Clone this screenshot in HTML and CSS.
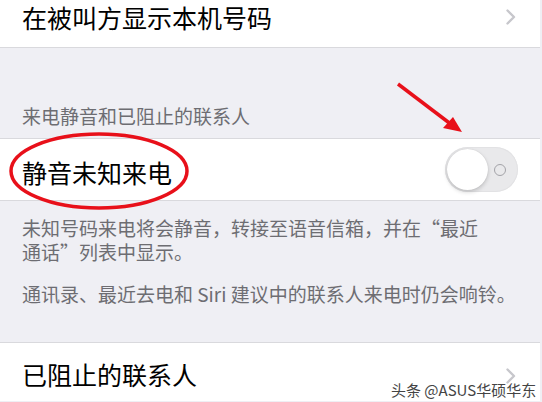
FILE: index.html
```html
<!DOCTYPE html>
<html lang="zh-CN">
<head>
    <meta charset="UTF-8">
    <meta name="viewport" content="width=device-width, initial-scale=1.0">
    <title>电话</title>
    <link rel="stylesheet" href="styles.css">
</head>
<body>

    <div class="settings">
        <div class="cell cell-top">
            <span class="cell-title">在被叫方显示本机号码</span>
            <svg class="chevron" width="10" height="16" viewBox="0 0 10 16"><polyline points="1.5,1.5 8,8 1.5,14.5" /></svg>
        </div>

        <div class="group-header">来电静音和已阻止的联系人</div>

        <div class="cell cell-switch">
            <span class="cell-title">静音未知来电</span>
            <div class="toggle">
                <div class="toggle-knob"></div>
                <div class="toggle-off"></div>
            </div>
        </div>

        <div class="group-footer">
            <p>未知号码来电将会静音，转接至语音信箱，并在“最近</p>
            <p>通话”列表中显示。</p>
            <p class="footer-note">通讯录、最近去电和 Siri 建议中的联系人来电时仍会响铃。</p>
        </div>

        <div class="cell cell-bottom">
            <span class="cell-title">已阻止的联系人</span>
            <svg class="chevron" width="10" height="16" viewBox="0 0 10 16"><polyline points="1.5,1.5 8,8 1.5,14.5" /></svg>
        </div>
    </div>

    <!-- red marks drawn over the screenshot -->
    <svg class="marks" width="542" height="402" viewBox="0 0 542 402">
        <ellipse cx="99" cy="171" rx="88" ry="37" />
        <line x1="398" y1="84" x2="452" y2="125" />
        <polygon points="462,132 443,128 453,117" />
    </svg>

    <div class="watermark">头条 @ASUS华硕华东</div>

</body>
</html>
```

FILE: styles.css
```css
html, body {
    margin: 0;
    padding: 0;
}

body {
    width: 542px;
    height: 402px;
    overflow: hidden;
    position: relative;
    background-color: #efeff4;
    font-family: "Noto Sans CJK SC", "Noto Sans", sans-serif;
}

.settings {
    width: 540px;
}

.cell {
    display: flex;
    justify-content: space-between;
    background-color: #ffffff;
    padding: 0 24px 0 22px;
    color: #000000;
}

.cell-title {
    font-size: 25px;
}

.chevron polyline {
    fill: none;
    stroke: #c7c7cc;
    stroke-width: 2.4;
    stroke-linecap: round;
    stroke-linejoin: round;
}

.cell-top {
    height: 47px;
    align-items: center;
    border-bottom: 1px solid #d9d9dd;
}

.cell-top .cell-title {
    line-height: 34px;
    margin-top: -13px;
}

.cell-top .chevron {
    margin-top: -14px;
}

.group-header {
    height: 90px;
    box-sizing: border-box;
    display: flex;
    align-items: flex-end;
    padding: 0 22px 10px;
    font-size: 19px;
    line-height: 24px;
    color: #6d6d72;
}

.cell-switch {
    height: 63px;
    box-sizing: border-box;
    align-items: center;
    padding-right: 22px;
    border-top: 1px solid #d9d9dd;
    border-bottom: 1px solid #d9d9dd;
}

.cell-switch .cell-title {
    margin-top: 4px;
}

.toggle {
    width: 73px;
    height: 45px;
    box-sizing: border-box;
    border-radius: 23px;
    background-color: #e9e9eb;
    box-shadow: inset 0 0 0 1px #e2e2e4;
    display: flex;
    align-items: center;
    padding: 0 2px;
}

.toggle-knob {
    width: 41px;
    height: 41px;
    border-radius: 50%;
    background-color: #ffffff;
    box-shadow: 0 2px 4px rgba(0, 0, 0, 0.18), 0 0 1px rgba(0, 0, 0, 0.15);
}

.toggle-off {
    width: 10px;
    height: 10px;
    margin-left: 6px;
    border-radius: 50%;
    border: 1.6px solid #a3a3a8;
}

.group-footer {
    height: 141px;
    box-sizing: border-box;
    padding: 15px 22px 0;
    font-size: 19px;
    line-height: 24px;
    color: #6d6d72;
}

.group-footer p {
    margin: 0;
    height: 24px;
    white-space: nowrap;
}

.group-footer .footer-note {
    margin-top: 18px;
}

.cell-bottom {
    height: 59px;
    box-sizing: border-box;
    border-top: 1px solid #d9d9dd;
    padding-top: 17px;
}

.cell-bottom .cell-title {
    line-height: 28px;
}

.cell-bottom .chevron {
    margin-top: 8px;
}

.marks {
    position: absolute;
    left: 0;
    top: 0;
}

.marks ellipse,
.marks line {
    fill: none;
    stroke: #e8101a;
    stroke-width: 3.5;
}

.marks polygon {
    fill: #e8101a;
}

.watermark {
    position: absolute;
    left: 391px;
    top: 380px;
    font-size: 15px;
    line-height: 20px;
    color: #444444;
    text-shadow: 0 0 1px #ffffff, 0 0 2px #ffffff;
    white-space: nowrap;
}
```
